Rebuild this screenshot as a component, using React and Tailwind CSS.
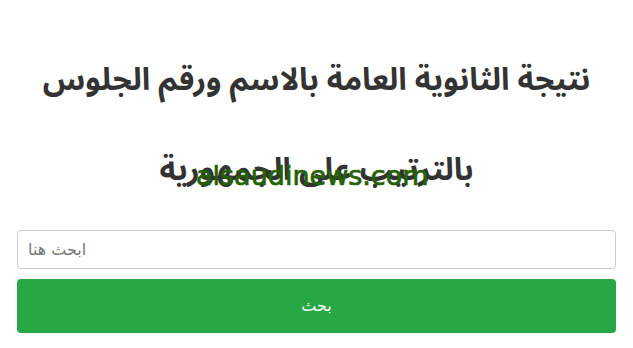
import React from 'react';

export default function App() {
  return (
    <div className="min-h-screen bg-white px-[17px] pt-[35px] font-['Noto_Sans_Arabic','DejaVu_Sans',sans-serif]">
      <div className="relative">
        <h1 dir="rtl" className="text-center text-[31px] font-bold leading-[90px] text-[#333]">
          نتيجة الثانوية العامة بالاسم ورقم الجلوس بالترتيب على الجمهورية
        </h1>
        {/* watermark over the title */}
        <span className="pointer-events-none absolute left-[179px] top-[127px] font-['DejaVu_Sans',sans-serif] text-[27px] leading-[27px] text-[#226200] [-webkit-text-stroke:0.7px_#226200]">
          alsaudinews.com
        </span>
      </div>
      <input
        type="text"
        placeholder="ابحث هنا"
        className="mt-[15px] block h-[39px] w-full rounded border border-[#ccc] px-[10px] font-['DejaVu_Sans',sans-serif] text-[16px] text-[#555] outline-none placeholder:text-[#777]"
      />
      <button className="mt-[10px] block h-[54px] w-full rounded bg-[#28a745] font-['DejaVu_Sans',sans-serif] text-[16px] font-normal text-white">
        بحث
      </button>
    </div>
  );
}
